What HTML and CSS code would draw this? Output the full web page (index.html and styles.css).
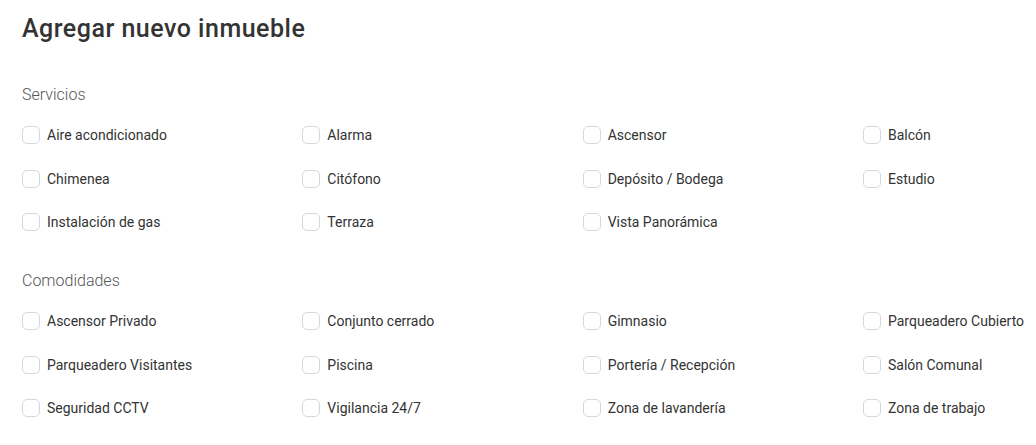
FILE: index.html
```html
<!DOCTYPE html>
<html lang="es">
<head>
<meta charset="utf-8">
<title>Agregar nuevo inmueble</title>
<link rel="stylesheet" href="styles.css">
</head>
<body>
<main class="page">
  <h1 class="title">Agregar nuevo inmueble</h1>

  <section class="section">
    <h2 class="section-label">Servicios</h2>
    <div class="options">
      <label class="option"><input type="checkbox" class="box"><span>Aire acondicionado</span></label>
      <label class="option"><input type="checkbox" class="box"><span>Alarma</span></label>
      <label class="option"><input type="checkbox" class="box"><span>Ascensor</span></label>
      <label class="option"><input type="checkbox" class="box"><span>Balcón</span></label>
      <label class="option"><input type="checkbox" class="box"><span>Chimenea</span></label>
      <label class="option"><input type="checkbox" class="box"><span>Citófono</span></label>
      <label class="option"><input type="checkbox" class="box"><span>Depósito / Bodega</span></label>
      <label class="option"><input type="checkbox" class="box"><span>Estudio</span></label>
      <label class="option"><input type="checkbox" class="box"><span>Instalación de gas</span></label>
      <label class="option"><input type="checkbox" class="box"><span>Terraza</span></label>
      <label class="option"><input type="checkbox" class="box"><span>Vista Panorámica</span></label>
    </div>
  </section>

  <section class="section">
    <h2 class="section-label">Comodidades</h2>
    <div class="options">
      <label class="option"><input type="checkbox" class="box"><span>Ascensor Privado</span></label>
      <label class="option"><input type="checkbox" class="box"><span>Conjunto cerrado</span></label>
      <label class="option"><input type="checkbox" class="box"><span>Gimnasio</span></label>
      <label class="option"><input type="checkbox" class="box"><span>Parqueadero Cubierto</span></label>
      <label class="option"><input type="checkbox" class="box"><span>Parqueadero Visitantes</span></label>
      <label class="option"><input type="checkbox" class="box"><span>Piscina</span></label>
      <label class="option"><input type="checkbox" class="box"><span>Portería / Recepción</span></label>
      <label class="option"><input type="checkbox" class="box"><span>Salón Comunal</span></label>
      <label class="option"><input type="checkbox" class="box"><span>Seguridad CCTV</span></label>
      <label class="option"><input type="checkbox" class="box"><span>Vigilancia 24/7</span></label>
      <label class="option"><input type="checkbox" class="box"><span>Zona de lavandería</span></label>
      <label class="option"><input type="checkbox" class="box"><span>Zona de trabajo</span></label>
    </div>
  </section>
</main>
</body>
</html>
```

FILE: styles.css
```css
html, body {
  margin: 0;
  padding: 0;
  background: #ffffff;
  overflow: hidden;
}

body {
  font-family: Roboto, "Liberation Sans", Arial, sans-serif;
  color: #333333;
}

.page {
  padding: 14.5px 22px 0 22px;
  width: 1036px;
  box-sizing: border-box;
  overflow: hidden;
}

.title {
  margin: 0;
  font-size: 25px;
  line-height: 28px;
  font-weight: 500;
  letter-spacing: 0.5px;
  color: #333333;
}

.section {
  margin-top: 40px;
}

.section + .section {
  margin-top: 37.5px;
}

.section-label {
  margin: 0 0 19.5px 0;
  font-size: 16px;
  line-height: 24px;
  font-weight: 300;
  color: #555555;
}

.options {
  display: grid;
  grid-template-columns: repeat(4, 280.33px);
  row-gap: 25.5px;
}

.option {
  display: flex;
  align-items: center;
  gap: 7px;
  height: 18px;
  font-size: 14px;
  line-height: 18px;
  color: #333333;
  white-space: nowrap;
  cursor: pointer;
}

.box {
  appearance: none;
  -webkit-appearance: none;
  margin: 0;
  width: 18px;
  height: 18px;
  flex: 0 0 18px;
  border: 1px solid #d3d8de;
  border-radius: 5px;
  background: #ffffff;
  box-sizing: border-box;
}
```
